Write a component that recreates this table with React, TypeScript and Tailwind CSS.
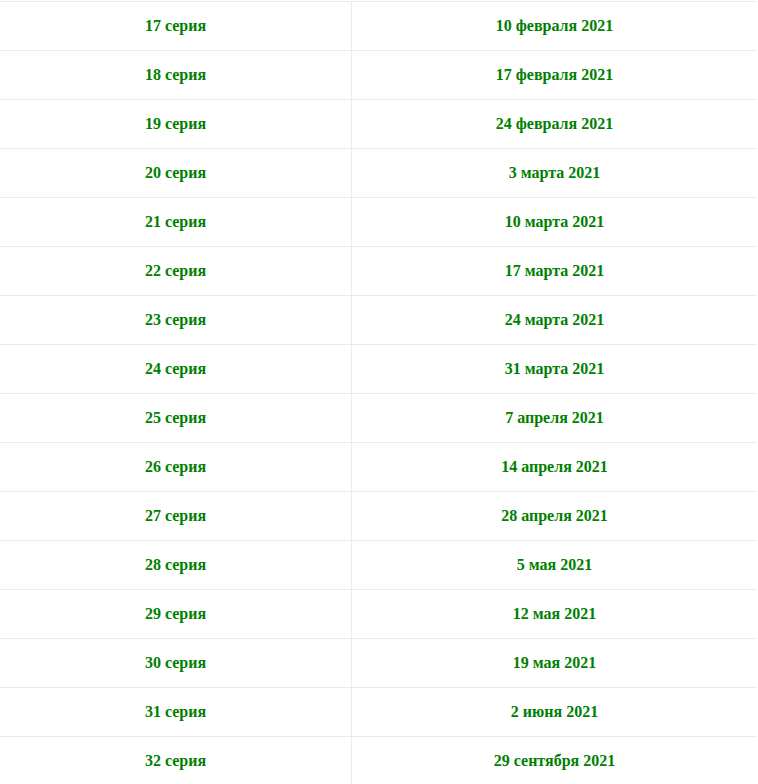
const rows: [string, string][] = [
  ['17 серия', '10 февраля 2021'],
  ['18 серия', '17 февраля 2021'],
  ['19 серия', '24 февраля 2021'],
  ['20 серия', '3 марта 2021'],
  ['21 серия', '10 марта 2021'],
  ['22 серия', '17 марта 2021'],
  ['23 серия', '24 марта 2021'],
  ['24 серия', '31 марта 2021'],
  ['25 серия', '7 апреля 2021'],
  ['26 серия', '14 апреля 2021'],
  ['27 серия', '28 апреля 2021'],
  ['28 серия', '5 мая 2021'],
  ['29 серия', '12 мая 2021'],
  ['30 серия', '19 мая 2021'],
  ['31 серия', '2 июня 2021'],
  ['32 серия', '29 сентября 2021'],
]

export default function App() {
  return (
    <div className="bg-white min-h-screen pt-px" style={{ fontFamily: '"Liberation Serif", "Times New Roman", serif' }}>
      <div className="w-[757px] border-t border-[#ebebeb]">
        {rows.map(([episode, date]) => (
          <div key={episode} className="grid grid-cols-[352px_1fr] border-b border-[#ebebeb]">
            <div className="h-12 flex items-center justify-center border-r border-[#ebebeb] text-base font-bold text-[#008000]">
              {episode}
            </div>
            <div className="h-12 flex items-center justify-center text-base font-bold text-[#008000]">
              {date}
            </div>
          </div>
        ))}
      </div>
    </div>
  )
}
